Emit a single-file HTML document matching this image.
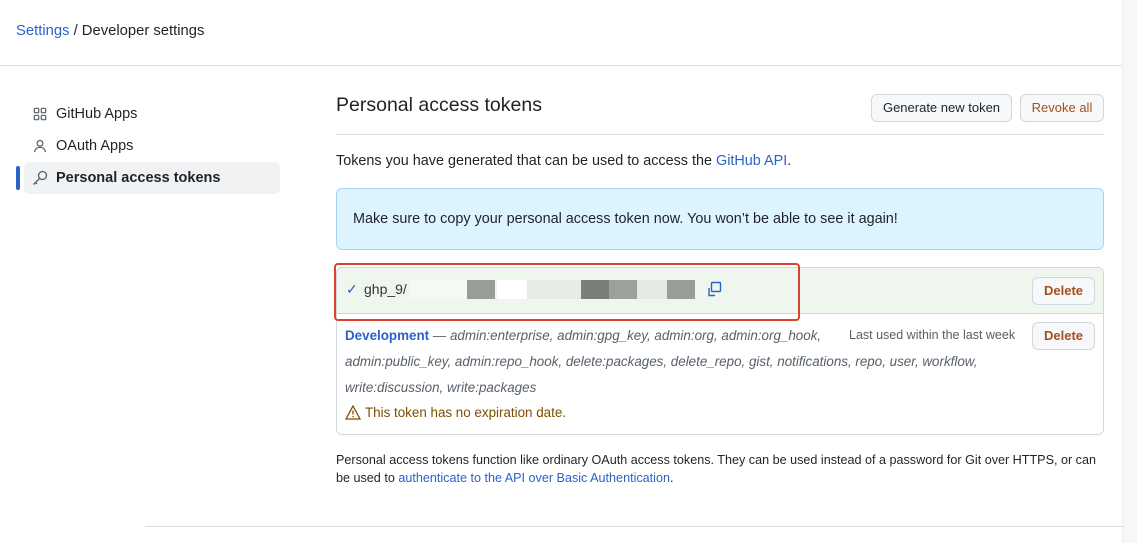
<!DOCTYPE html>
<html><head><meta charset="utf-8"><style>
*{margin:0;padding:0;box-sizing:border-box}
body{width:1137px;height:543px;overflow:hidden;background:#fff;font-family:"Liberation Sans",sans-serif;color:#1f2328;position:relative}
.a{position:absolute;white-space:nowrap}
.blue{color:#0969da}
.btn{position:absolute;border:1px solid #d0d7de;border-radius:6px;background:#f6f8fa;font-size:13px;font-weight:bold;text-align:center}
.it{font-style:italic;color:#57606a}
</style></head><body>
<div class="a" style="left:16px;top:23px;font-size:14.8px"><span style="color:#2c62c8">Settings</span> / Developer settings</div>
<div class="a" style="left:0;top:65px;width:1122px;height:1px;background:#d8dee4"></div>
<div class="a" style="left:1122px;top:0;width:15px;height:543px;background:#f7f7f7;border-left:1px solid #ececec"></div>

<svg class="a" style="left:33px;top:107px" width="14" height="14" viewBox="0 0 16 16" fill="none" stroke="#57606a" stroke-width="1.4"><rect x="1.5" y="1.5" width="5" height="5" rx="1"/><rect x="9.5" y="1.5" width="5" height="5" rx="1"/><rect x="1.5" y="9.5" width="5" height="5" rx="1"/><rect x="9.5" y="9.5" width="5" height="5" rx="1"/></svg>
<div class="a" style="left:56px;top:106px;font-size:14.5px">GitHub Apps</div>
<svg class="a" style="left:33px;top:139px" width="14" height="14" viewBox="0 0 16 16" fill="none" stroke="#57606a" stroke-width="1.4"><circle cx="8" cy="5" r="3.3"/><path d="M2 15c0-3.5 2.7-5.5 6-5.5s6 2 6 5.5"/></svg>
<div class="a" style="left:56px;top:138px;font-size:14.5px">OAuth Apps</div>
<div class="a" style="left:16px;top:166px;width:4px;height:24px;background:#2c62c8;border-radius:2px"></div>
<div class="a" style="left:24px;top:162px;width:256px;height:32px;background:#f1f2f4;border-radius:6px"></div>
<svg class="a" style="left:32px;top:170px" width="16" height="16" viewBox="0 0 16 16" fill="none" stroke="#57606a" stroke-width="1.3"><circle cx="10.5" cy="5.5" r="4"/><path d="M7.5 8.5L1.5 14.5M3.5 12.5l1.5 1.5"/></svg>
<div class="a" style="left:56px;top:170px;font-size:14.5px;font-weight:bold">Personal access tokens</div>

<div class="a" style="left:336px;top:94px;font-size:19.5px">Personal access tokens</div>
<div class="btn" style="left:871px;top:94px;width:141px;height:28px;line-height:26px;font-weight:normal">Generate new token</div>
<div class="btn" style="left:1020px;top:94px;width:84px;height:28px;line-height:26px;color:#a4501c;font-weight:normal">Revoke all</div>
<div class="a" style="left:336px;top:134px;width:768px;height:1px;background:#d8dee4"></div>
<div class="a" style="left:336px;top:153px;font-size:14.4px">Tokens you have generated that can be used to access the <span style="color:#2c62c8">GitHub API</span>.</div>

<div class="a" style="left:336px;top:188px;width:768px;height:62px;background:#ddf4ff;border:1px solid #a8d3f5;border-radius:6px"></div>
<div class="a" style="left:353px;top:211px;font-size:14.4px">Make sure to copy your personal access token now. You won’t be able to see it again!</div>

<div class="a" style="left:336px;top:267px;width:768px;height:168px;border:1px solid #d0d7de;border-radius:6px;overflow:hidden">
 <div style="height:46px;background:#eff6ee;border-bottom:1px solid #d0d7de"></div>
</div>
<div class="a" style="left:346px;top:281px;font-size:14px;color:#2c62c8">✓</div>
<div class="a" style="left:364px;top:281px;font-size:14px;color:#333">ghp_9/</div>
<div class="a" style="left:409px;top:280px;width:60px;height:19px;background:#f5f8f4"></div>
<div class="a" style="left:467px;top:280px;width:28px;height:19px;background:#9a9c99"></div>
<div class="a" style="left:497px;top:280px;width:30px;height:19px;background:#fff"></div>
<div class="a" style="left:527px;top:280px;width:54px;height:19px;background:#e8ece7"></div>
<div class="a" style="left:581px;top:280px;width:28px;height:19px;background:#7c7e7b"></div>
<div class="a" style="left:609px;top:280px;width:28px;height:19px;background:#9ea09d"></div>
<div class="a" style="left:637px;top:280px;width:30px;height:19px;background:#e6eae5"></div>
<div class="a" style="left:667px;top:280px;width:28px;height:19px;background:#9a9c99"></div>
<svg class="a" style="left:706px;top:281px" width="16" height="16" viewBox="0 0 16 16" fill="none" stroke="#2c62c8" stroke-width="1.4"><rect x="5.5" y="1.5" width="9" height="9" rx="1"/><path d="M3 7v7.5h6"/></svg>
<div class="a" style="left:334px;top:263px;width:466px;height:58px;border:2px solid #d9432f;border-radius:4px"></div>
<div class="btn" style="left:1032px;top:277px;width:63px;height:28px;line-height:26px;color:#a4501c">Delete</div>

<div class="a" style="left:345px;top:328px;font-size:13.4px"><b style="color:#2c62c8">Development</b> <span class="it">— admin:enterprise, admin:gpg_key, admin:org, admin:org_hook,</span></div>
<div class="a" style="left:849px;top:328px;font-size:12.5px;color:#57606a">Last used within the last week</div>
<div class="btn" style="left:1032px;top:322px;width:63px;height:28px;line-height:26px;color:#a4501c">Delete</div>
<div class="a it" style="left:345px;top:354px;font-size:13.4px">admin:public_key, admin:repo_hook, delete:packages, delete_repo, gist, notifications, repo, user, workflow,</div>
<div class="a it" style="left:345px;top:380px;font-size:13.4px">write:discussion, write:packages</div>
<svg class="a" style="left:345px;top:405px" width="16" height="15" viewBox="0 0 16 15" fill="none" stroke="#7d4e00" stroke-width="1.3"><path d="M8 1L15 14H1z"/><path d="M8 5.5v4M8 11v1.3"/></svg>
<div class="a" style="left:365px;top:405px;font-size:13.4px;color:#7d4e00">This token has no expiration date.</div>

<div class="a" style="left:336px;top:453px;font-size:12.6px;color:#1f2328">Personal access tokens function like ordinary OAuth access tokens. They can be used instead of a password for Git over HTTPS, or can</div>
<div class="a" style="left:336px;top:471px;font-size:12.6px">be used to <span style="color:#2c62c8">authenticate to the API over Basic Authentication</span>.</div>
<div class="a" style="left:145px;top:526px;width:979px;height:1px;background:#d8dee4"></div>
</body></html>
